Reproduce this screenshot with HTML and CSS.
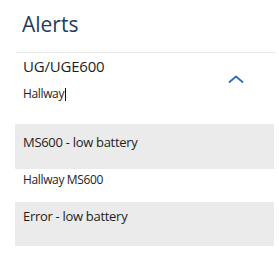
FILE: index.html
```html
<!DOCTYPE html>
<html>
<head>
<meta charset="utf-8">
<link rel="stylesheet" href="styles.css">
</head>
<body>
<div class="page">
  <div class="header">
    <h1 class="title">Alerts</h1>
  </div>
  <div class="device">
    <div class="device-info">
      <div class="device-name">UG/UGE600</div>
      <div class="device-loc">Hallway<span class="caret"></span></div>
    </div>
    <svg class="chevron" width="16" height="8" viewBox="0 0 16 8"><polyline points="1.5,7 8,1.5 14.5,7" fill="none" stroke="#2f6db3" stroke-width="1.8" stroke-linecap="round" stroke-linejoin="round"/></svg>
  </div>
  <div class="alert first">MS600 - low battery</div>
  <div class="sub">Hallway MS600</div>
  <div class="alert second">Error - low battery</div>
</div>
</body>
</html>
```

FILE: styles.css
```css
html, body {
  margin: 0;
  padding: 0;
  background: #ffffff;
}
.page {
  width: 279px;
  height: 260px;
  font-family: "Open Sans", "Liberation Sans", sans-serif;
  color: #1e1e1e;
  overflow: hidden;
}
.header {
  margin: 0 3px 0 16px;
  padding: 10px 0 14px 6px;
  border-bottom: 1px solid #e8e8e8;
}
.title {
  margin: 0;
  font-size: 21px;
  line-height: 28px;
  font-weight: 400;
  color: #1f3c5c;
}
.device {
  display: flex;
  align-items: center;
  justify-content: space-between;
  padding: 3px 35px 0 23px;
}
.device-name {
  font-size: 15px;
  line-height: 21px;
  letter-spacing: -0.2px;
}
.device-loc {
  margin-top: 9px;
  font-size: 12px;
  line-height: 16px;
  letter-spacing: -0.35px;
  display: flex;
  align-items: center;
}
.caret {
  display: inline-block;
  width: 1px;
  height: 13px;
  background: #111;
  margin-left: 1px;
}
.chevron {
  display: block;
}
.alert {
  margin: 0 5px 0 15px;
  padding: 0 8px;
  background: #ebebeb;
  font-size: 13px;
  line-height: 18px;
  letter-spacing: -0.3px;
  box-sizing: border-box;
}
.alert.first {
  margin-top: 22px;
  height: 45px;
  padding-top: 9px;
}
.alert.second {
  margin-top: 14px;
  height: 44px;
  padding-top: 5px;
}
.sub {
  margin-top: 3px;
  padding-left: 23px;
  font-size: 12px;
  line-height: 16px;
  letter-spacing: -0.35px;
}
```
